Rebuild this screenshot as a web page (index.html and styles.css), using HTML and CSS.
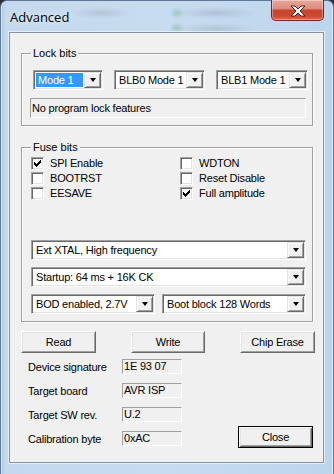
FILE: index.html
```html
<!DOCTYPE html>
<html>
<head>
<meta charset="utf-8">
<link rel="stylesheet" href="styles.css">
</head>
<body>
<div class="window">
  <div class="titlebar">
    <span class="title">Advanced</span>
    <div class="cap-close">
      <svg width="16" height="12" viewBox="-1 -1 16 12"><polygon points="0,0 4,0 7,3 10,0 14,0 9,5 14,10 10,10 7,7 4,10 0,10 5,5" fill="#fff" stroke="#4a231c" stroke-width="1" stroke-linejoin="round"/></svg>
    </div>
  </div>
  <div class="client">
    <div class="group lock">
      <span class="legend">Lock bits</span>
      <div class="combo-row">
        <div class="combo w70"><span class="val sel">Mode 1</span><span class="arrow"><i></i></span></div>
        <div class="combo w91"><span class="val">BLB0 Mode 1</span><span class="arrow"><i></i></span></div>
        <div class="combo w92"><span class="val">BLB1 Mode 1</span><span class="arrow"><i></i></span></div>
      </div>
      <div class="status">No program lock features</div>
    </div>

    <div class="group fuse">
      <span class="legend">Fuse bits</span>
      <div class="checks">
        <label class="chk"><span class="box"><svg width="7" height="7" viewBox="0 0 7 7"><path d="M6 0h1v1h-1zM5 1h2v1h-2zM0 2h1v1h-1zM4 2h3v1h-3zM0 3h2v1h-2zM3 3h3v1h-3zM0 4h5v1h-5zM1 5h3v1h-3zM2 6h1v1h-1z" fill="#000"/></svg></span>SPI Enable</label>
        <label class="chk"><span class="box"></span>WDTON</label>
        <label class="chk"><span class="box"></span>BOOTRST</label>
        <label class="chk"><span class="box"></span>Reset Disable</label>
        <label class="chk"><span class="box"></span>EESAVE</label>
        <label class="chk"><span class="box"><svg width="7" height="7" viewBox="0 0 7 7"><path d="M6 0h1v1h-1zM5 1h2v1h-2zM0 2h1v1h-1zM4 2h3v1h-3zM0 3h2v1h-2zM3 3h3v1h-3zM0 4h5v1h-5zM1 5h3v1h-3zM2 6h1v1h-1z" fill="#000"/></svg></span>Full amplitude</label>
      </div>
      <div class="drops">
        <div class="combo wfull"><span class="val">Ext XTAL, High frequency</span><span class="arrow"><i></i></span></div>
        <div class="combo wfull"><span class="val">Startup: 64 ms + 16K CK</span><span class="arrow"><i></i></span></div>
        <div class="drop-row">
          <div class="combo w124"><span class="val">BOD enabled, 2.7V</span><span class="arrow"><i></i></span></div>
          <div class="combo w144"><span class="val">Boot block 128 Words</span><span class="arrow"><i></i></span></div>
        </div>
      </div>
    </div>

    <div class="btn-row">
      <button class="btn w75">Read</button>
      <button class="btn w74">Write</button>
      <button class="btn w75">Chip Erase</button>
    </div>

    <div class="info">
      <div class="info-list">
        <div class="info-row"><span class="lbl">Device signature</span><span class="vbox">1E 93 07</span></div>
        <div class="info-row"><span class="lbl">Target board</span><span class="vbox">AVR ISP</span></div>
        <div class="info-row"><span class="lbl">Target SW rev.</span><span class="vbox">U.2</span></div>
        <div class="info-row"><span class="lbl">Calibration byte</span><span class="vbox">0xAC</span></div>
      </div>
      <button class="btn w75 default">Close</button>
    </div>
  </div>
</div>
</body>
</html>
```
FILE: styles.css
```css
* { box-sizing: border-box; }
html, body { margin: 0; padding: 0; }
body {
  width: 334px;
  height: 474px;
  overflow: hidden;
  background: #2a2f36;
  font-family: "Liberation Sans", Arial, sans-serif;
  font-size: 11px;
  color: #000;
}

.window {
  width: 334px;
  height: 474px;
  display: flex;
  flex-direction: column;
  padding: 0 9px 11px 8px;
  border-radius: 7px 7px 0 0;
  border: 1px solid #5f7895;
  border-bottom: none;
  background:
    radial-gradient(ellipse 30px 6px at 100px 12px, rgba(120,130,140,0.25), transparent),
    radial-gradient(ellipse 40px 6px at 215px 12px, rgba(110,120,130,0.25), transparent),
    radial-gradient(ellipse 40px 6px at 215px 28px, rgba(110,120,130,0.22), transparent),
    radial-gradient(ellipse 8px 6px at 176px 12px, rgba(80,150,90,0.3), transparent),
    radial-gradient(ellipse 8px 6px at 176px 27px, rgba(80,150,90,0.3), transparent),
    linear-gradient(to right, #a9c6e4 0, #c4d9ef 4px, #c8dcf0 50%, #bcd5ee 100%);
  box-shadow: inset 1px 0 0 rgba(255,255,255,0.6), inset -1px 0 0 rgba(255,255,255,0.5);
}

.titlebar {
  height: 31px;
  display: flex;
  align-items: flex-start;
  flex: none;
}
.title {
  font-family: "Open Sans", "Noto Sans", sans-serif;
  font-size: 13px;
  line-height: 18px;
  margin-top: 7px;
  padding-left: 1px;
  color: #000;
  text-shadow: 0 0 6px rgba(255,255,255,0.9);
}
.cap-close {
  margin-left: auto;
  margin-right: 0;
  width: 53px;
  height: 21px;
  margin-top: -1px;
  border: 1px solid #6b2a22;
  border-top: none;
  border-radius: 0 0 5px 5px;
  background: linear-gradient(to bottom, #e7a89c 0, #dc8a7c 45%, #c8442d 50%, #c94a31 80%, #e06a48 100%);
  box-shadow: inset 0 0 0 1px rgba(255,255,255,0.35);
  display: flex;
  align-items: center;
  justify-content: center;
  padding-top: 1px;
}

.client {
  flex: 1;
  background: #f0f0f0;
  border: 1px solid #8494a6;
  box-shadow: 0 0 0 1px rgba(255,255,255,0.55);
  padding: 20px 0 0 11px;
}

/* group boxes */
.group {
  position: relative;
  width: 292px;
  border: 1px solid #a0a0a0;
  box-shadow: inset 1px 1px 0 #fff, 1px 1px 0 #fff;
}
.legend {
  position: absolute;
  top: -7px;
  left: 9px;
  padding: 0 2px;
  background: #f0f0f0;
  line-height: 13px;
}
.lock {
  height: 73px;
  padding: 16px 0 0 8px;
}
.fuse {
  height: 175px;
  margin-top: 21px;
  padding: 9px 0 0 9px;
}

/* combos */
.combo-row {
  display: flex;
  gap: 11px;
  margin-left: 3px;
}
.combo {
  height: 20px;
  display: flex;
  background: #fff;
  border: 1px solid;
  border-color: #a0a0a0 #fff #fff #a0a0a0;
  box-shadow: inset 1px 1px 0 #696969, inset -1px -1px 0 #e3e3e3;
  padding: 1px;
}
.w70 { width: 70px; }
.w91 { width: 91px; }
.w92 { width: 92px; }
.w124 { width: 124px; }
.w144 { width: 144px; }
.wfull { width: 275px; }
.val {
  flex: 1;
  display: flex;
  align-items: center;
  padding-left: 3px;
  white-space: nowrap;
  overflow: hidden;
  letter-spacing: -0.2px;
}
.val.sel {
  margin: 1px;
  padding-left: 2px;
  background: #3399ff;
  color: #fff;
}
.arrow {
  width: 17px;
  flex: none;
  background: #f0f0f0;
  border: 1px solid;
  border-color: #e3e3e3 #696969 #696969 #e3e3e3;
  box-shadow: inset 1px 1px 0 #fff, inset -1px -1px 0 #a0a0a0;
  display: flex;
  align-items: center;
  justify-content: center;
}
.arrow i {
  width: 0;
  height: 0;
  border-left: 3.5px solid transparent;
  border-right: 3.5px solid transparent;
  border-top: 4px solid #000;
  margin-left: 1px;
}

.status {
  margin-top: 8px;
  width: 276px;
  height: 20px;
  border: 1px solid;
  border-color: #a0a0a0 #fff #fff #a0a0a0;
  display: flex;
  align-items: center;
  padding-left: 1px;
  letter-spacing: -0.2px;
}

/* checkboxes */
.checks {
  display: grid;
  grid-template-columns: 149px 120px;
  grid-auto-rows: 15px;
}
.chk {
  display: flex;
  align-items: flex-start;
  gap: 6px;
  line-height: 13px;
  letter-spacing: -0.2px;
}
.box {
  width: 13px;
  height: 13px;
  flex: none;
  background: #fff;
  border: 1px solid;
  border-color: #a0a0a0 #fff #fff #a0a0a0;
  box-shadow: inset 1px 1px 0 #696969, inset -1px -1px 0 #e3e3e3;
  padding: 2px;
  display: flex;
}

.drops {
  margin-top: 38px;
  display: flex;
  flex-direction: column;
  gap: 7px;
}
.drop-row {
  display: flex;
  gap: 7px;
}

/* buttons */
.btn-row {
  display: flex;
  gap: 35px;
  margin-top: 9px;
}
.btn {
  height: 22px;
  font-family: "Liberation Sans", Arial, sans-serif;
  font-size: 11px;
  letter-spacing: -0.2px;
  color: #000;
  background: #f0f0f0;
  border: 1px solid;
  border-color: #fff #696969 #696969 #fff;
  box-shadow: inset 1px 1px 0 #e3e3e3, inset -1px -1px 0 #a0a0a0;
  padding: 0;
  margin: 0;
}
.w75 { width: 75px; }
.w74 { width: 74px; }
.btn.default {
  border: 1px solid #000;
  box-shadow: inset 1px 1px 0 #fff, inset -1px -1px 0 #696969, inset 2px 2px 0 #e3e3e3, inset -2px -2px 0 #a0a0a0;
}

/* info */
.info {
  display: flex;
  margin-top: 6px;
}
.info-list {
  margin-left: 7px;
  display: flex;
  flex-direction: column;
  gap: 9px;
}
.info-row {
  display: flex;
  align-items: center;
  height: 15px;
}
.lbl {
  width: 94px;
  letter-spacing: -0.2px;
}
.vbox {
  width: 60px;
  height: 15px;
  border: 1px solid;
  border-color: #a0a0a0 #fff #fff #a0a0a0;
  padding-left: 1px;
  line-height: 13px;
  letter-spacing: -0.2px;
}
.info .default {
  margin-left: auto;
  margin-right: 10px;
  align-self: flex-end;
  margin-bottom: -2px;
}
```
